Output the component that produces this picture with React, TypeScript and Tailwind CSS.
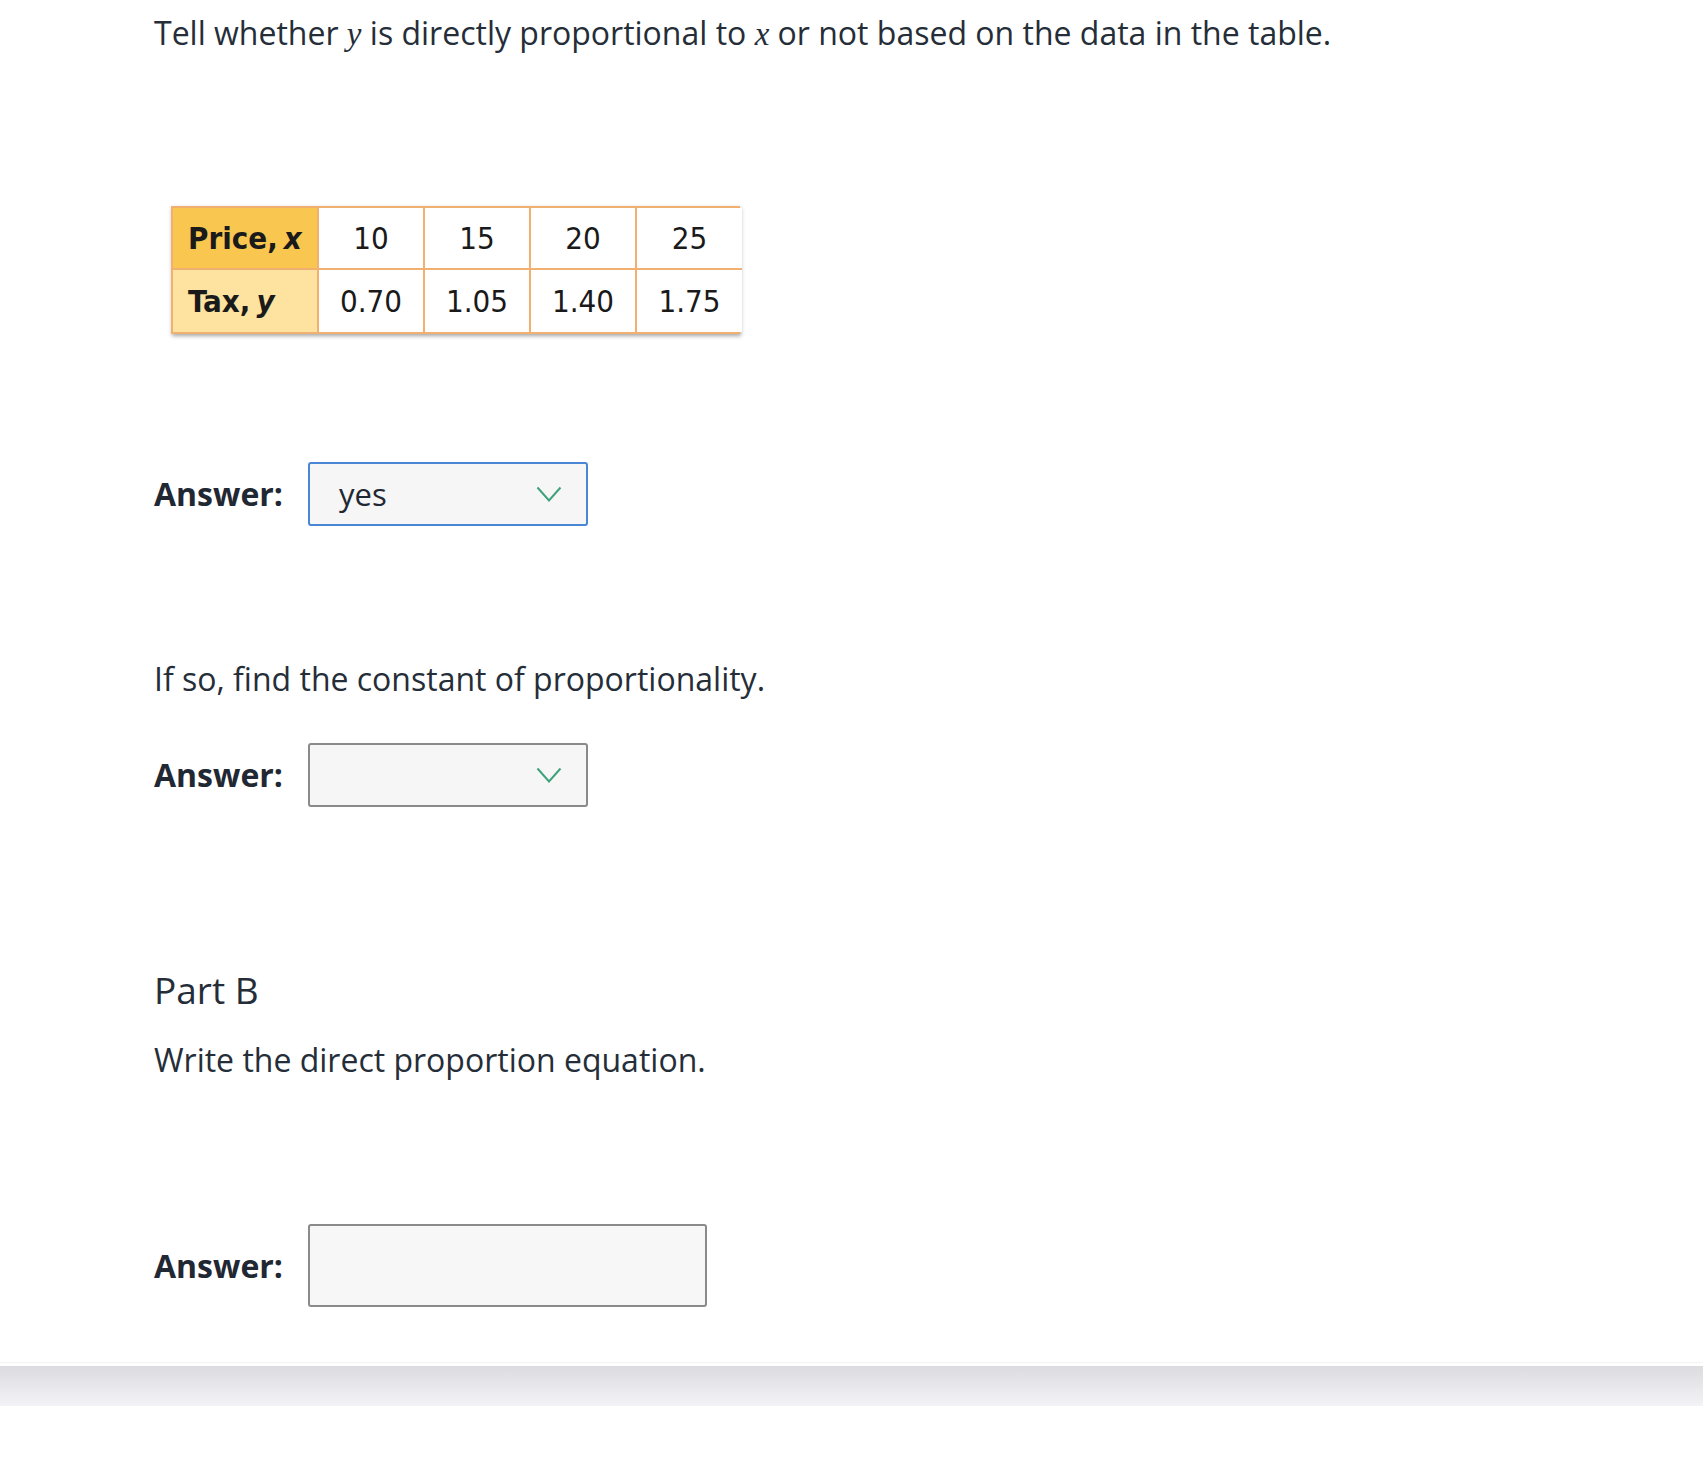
import React from "react";

const body = { fontFamily: '"Open Sans", "Noto Sans", sans-serif' };
const cond = { fontFamily: '"Liberation Sans Narrow", "DejaVu Sans Condensed", "Roboto", sans-serif' };
const mathF = { fontFamily: '"Liberation Serif", "DejaVu Serif", serif' };

function Chevron() {
  return (
    <svg width="26" height="16" viewBox="0 0 26 16" className="shrink-0">
      <polyline points="1.5,1.5 13,14.5 24.5,1.5" fill="none" stroke="#3ea27c" strokeWidth="2" />
    </svg>
  );
}

function Label() {
  return <div className="w-[154px] shrink-0 text-[32px] font-bold text-[#1f2833]">Answer:</div>;
}

function Select({ value, focused }: { value?: string; focused?: boolean }) {
  return (
    <div
      className={
        "flex h-[64px] w-[280px] items-center justify-between rounded-[3px] border-2 bg-[#f6f6f6] pl-[29px] pr-[24px] " +
        (focused ? "border-[#4a86d4]" : "border-[#8a8a8a]")
      }
    >
      <span className="text-[31px] text-[#1f2833]">{value ?? ""}</span>
      <Chevron />
    </div>
  );
}

const cellBase = "flex items-center justify-center border-[#f2b070] text-[31px] text-[#1a1a1a]";

export default function App() {
  const top = ["10", "15", "20", "25"];
  const bot = ["0.70", "1.05", "1.40", "1.75"];
  return (
    <div className="min-h-[1463px] bg-white" style={body}>
      <div className="pl-[154px]">
        <p className="mt-[11px] text-[32px] leading-[44px] text-[#252e38]">
          Tell whether <span className="text-[33px] italic" style={mathF}>y</span> is directly proportional to{" "}
          <span className="text-[33px] italic" style={mathF}>x</span> or not based on the data in the table.
        </p>

        <div className="ml-[17px] mt-[150px] w-[569px] shadow-[1px_2px_4px_rgba(0,0,0,0.35)]" style={cond}>
          <div className="grid grid-cols-[146px_repeat(3,106px)_105px] border-2 border-[#f2b070]">
            <div className="flex h-[62px] items-center border-b-2 border-r-2 border-[#f2b070] bg-[#f9c650] pl-[15px] text-[31px] font-bold text-[#1a1a1a]">
              Price, <span className="ml-[6px] italic">x</span>
            </div>
            {top.map((t, i) => (
              <div key={t} className={cellBase + " h-[62px] border-b-2 bg-white " + (i < 3 ? "border-r-2" : "")}>
                {t}
              </div>
            ))}
            <div className="flex h-[62px] items-center border-r-2 border-[#f2b070] bg-[#fde2a0] pl-[15px] text-[31px] font-bold text-[#1a1a1a]">
              Tax, <span className="ml-[6px] italic">y</span>
            </div>
            {bot.map((t, i) => (
              <div key={t} className={cellBase + " h-[62px] bg-white " + (i < 3 ? "border-r-2" : "")}>
                {t}
              </div>
            ))}
          </div>
        </div>

        <div className="mt-[128px] flex items-center">
          <Label />
          <Select value="yes" focused />
        </div>

        <p className="mt-[131px] text-[32px] leading-[44px] text-[#252e38]">If so, find the constant of proportionality.</p>

        <div className="mt-[42px] flex items-center">
          <Label />
          <Select />
        </div>

        <h2 className="mt-[159px] text-[37px] leading-[48px] text-[#252e38]">Part B</h2>
        <p className="mt-[24px] text-[32px] leading-[44px] text-[#252e38]">Write the direct proportion equation.</p>

        <div className="mt-[142px] flex items-center">
          <Label />
          <div className="h-[83px] w-[399px] rounded-[3px] border-2 border-[#8a8a8a] bg-[#f7f7f7]" />
        </div>
      </div>

      <div className="mt-[55px] h-[4px] border-t border-[#f3f3f3]" />
      <div className="h-[40px] bg-gradient-to-b from-[#dcdce0] to-[#f3f2f7]" />
    </div>
  );
}
